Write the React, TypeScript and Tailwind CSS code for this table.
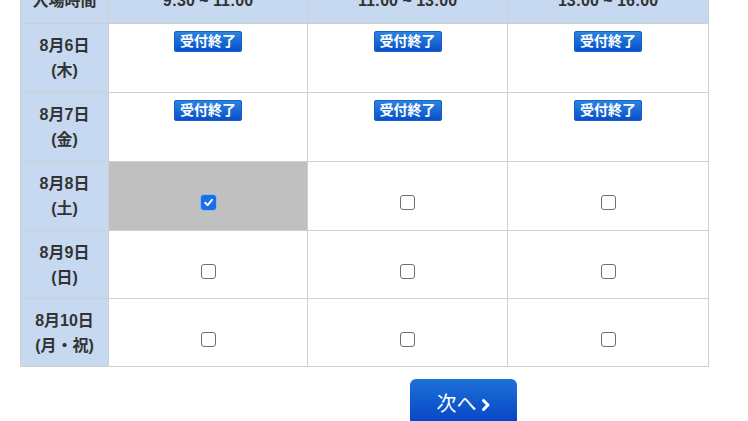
import React from "react";

const font = { fontFamily: '"Liberation Sans", "Noto Sans CJK JP", sans-serif' };

function Badge() {
  return (
    <span className="inline-flex h-[21px] items-center justify-center rounded-[3px] bg-gradient-to-b from-[#2e86e0] to-[#0a4cc8] px-[6px] text-[14px] font-bold leading-none text-white shadow-[0_0_0_1px_#1a5fc8_inset]">
      受付終了
    </span>
  );
}

function Check({ checked }: { checked?: boolean }) {
  if (checked) {
    return (
      <span className="flex h-[15px] w-[15px] items-center justify-center rounded-[3px] bg-[#1a6ee6] shadow-[0_0_0_1px_#8fb8f0]">
        <svg width="11" height="11" viewBox="0 0 10 10">
          <path d="M2 5.2 L4.2 7.4 L8.2 2.6" fill="none" stroke="white" strokeWidth="1.8" strokeLinecap="round" strokeLinejoin="round" />
        </svg>
      </span>
    );
  }
  return <span className="block h-[15px] w-[15px] rounded-[3px] border-[1.5px] border-[#6f6f6f] bg-white" />;
}

const rows: { d: string; w: string; closed?: boolean; sel?: number }[] = [
  { d: "8月6日", w: "(木)", closed: true },
  { d: "8月7日", w: "(金)", closed: true },
  { d: "8月8日", w: "(土)", sel: 0 },
  { d: "8月9日", w: "(日)" },
  { d: "8月10日", w: "(月・祝)" },
];

export default function App() {
  return (
    <div className="h-[421px] w-[748px] overflow-hidden bg-white text-[#333]" style={font}>
      <div className="ml-[20px] mt-[-22px] grid w-[689px] grid-cols-[88px_199px_200px_201px] border-l border-t border-[#cfcfcf]">
        <div className="flex h-[45px] items-center justify-center border-b border-r border-[#cfcfcf] bg-[#c6d9f1] text-[16px] font-bold">入場時間</div>
        <div className="flex h-[45px] items-center justify-center border-b border-r border-[#cfcfcf] bg-[#c6d9f1] text-[16px] font-bold">9:30 ~ 11:00</div>
        <div className="flex h-[45px] items-center justify-center border-b border-r border-[#cfcfcf] bg-[#c6d9f1] text-[16px] font-bold">11:00 ~ 13:00</div>
        <div className="flex h-[45px] items-center justify-center border-b border-r border-[#cfcfcf] bg-[#c6d9f1] text-[16px] font-bold">13:00 ~ 16:00</div>
        {rows.map((r, i) => (
          <React.Fragment key={r.d}>
            <div className={`flex ${i >= 3 ? "h-[68px]" : "h-[69px]"} flex-col items-center justify-center border-b border-r border-[#cfcfcf] bg-[#c6d9f1] text-[16px] font-bold leading-[25px]`}>
              <span>{r.d}</span>
              <span>{r.w}</span>
            </div>
            {[0, 1, 2].map((c) => (
              <div
                key={c}
                className={`flex ${i >= 3 ? "h-[68px]" : "h-[69px]"} justify-center border-b border-r border-[#cfcfcf] ${r.sel === c ? "bg-[#c0c0c0]" : "bg-white"} ${r.closed ? "pt-[5px]" : "pt-[33px]"}`}
              >
                {r.closed ? <div><Badge /></div> : <div><Check checked={r.sel === c} /></div>}
              </div>
            ))}
          </React.Fragment>
        ))}
      </div>
      <div className="ml-[410px] mt-[12px]">
        <button className="flex h-[48px] w-[107px] items-start justify-center gap-[4px] rounded-t-[6px] bg-gradient-to-b from-[#1f70d8] to-[#0a40c4] pt-[13px] text-[20px] leading-[24px] text-white">
          <span>次へ</span>
          <svg width="10" height="14" viewBox="0 0 10 14" className="mt-[6px]">
            <path d="M2.5 2.5 L7 7 L2.5 11.5" fill="none" stroke="white" strokeWidth="3" strokeLinecap="round" strokeLinejoin="round" />
          </svg>
        </button>
      </div>
    </div>
  );
}
